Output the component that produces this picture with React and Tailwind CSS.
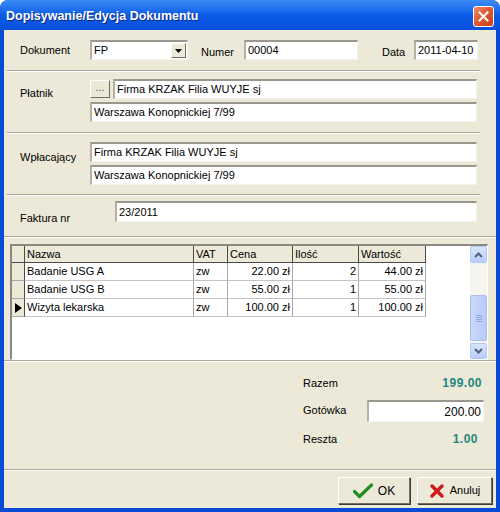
import React from "react";

const sunken =
  "bg-white border-t-2 border-l-2 border-t-[#9a988e] border-l-[#b3b1a6] border-r border-b border-r-[#f4f3ee] border-b-[#f4f3ee]";
const raised =
  "bg-[#ECE9D8] border border-t-white border-l-white border-r-[#716F64] border-b-[#716F64]";

function Field({ className = "", children, right }) {
  return (
    <div
      className={`${sunken} h-[20px] flex items-center px-[2px] text-[11px] text-black leading-none ${
        right ? "justify-end" : ""
      } ${className}`}
    >
      {children}
    </div>
  );
}

function Sep({ className = "" }) {
  return (
    <div className={`h-[2px] border-t border-t-[#ACA899] border-b border-b-white ${className}`} />
  );
}

function CheckIcon() {
  return (
    <svg width="20" height="16" viewBox="0 0 20 16">
      <path
        d="M1.5 8.5 L6.5 13.5 L18.5 2"
        fill="none"
        stroke="#1f8f1f"
        strokeWidth="3.2"
        strokeLinecap="round"
        strokeLinejoin="round"
      />
    </svg>
  );
}

function XIcon() {
  return (
    <svg width="16" height="16" viewBox="0 0 16 16">
      <path
        d="M3 3 L13 13 M13 3 L3 13"
        fill="none"
        stroke="#d01818"
        strokeWidth="3.4"
        strokeLinecap="round"
      />
    </svg>
  );
}

const rows = [
  { name: "Badanie USG A", vat: "zw", cena: "22.00 zł", ilosc: "2", wart: "44.00 zł" },
  { name: "Badanie USG B", vat: "zw", cena: "55.00 zł", ilosc: "1", wart: "55.00 zł" },
  { name: "Wizyta lekarska", vat: "zw", cena: "100.00 zł", ilosc: "1", wart: "100.00 zł", current: true },
];

function Grid() {
  const cell = "h-full flex items-center px-[2px] border-r border-r-[#a8a8a8] border-b border-b-[#c4c4c4]";
  const head = "h-full flex items-center px-[2px] bg-[#ECE9D8] border-r border-r-[#4a4a4a] border-b border-b-[#4a4a4a]";
  return (
    <div className="ml-[6px] mt-[6px] w-[478px] h-[116px] bg-white border-t-2 border-l-2 border-t-[#8b897f] border-l-[#8b897f] border-r border-b border-r-white border-b-white flex">
      <div className="flex-1 flex flex-col text-[11px] leading-none">
        <div className="flex h-[17px]">
          <div className={`${head} w-[13px]`} />
          <div className={`${head} w-[169px]`}>Nazwa</div>
          <div className={`${head} w-[34px]`}>VAT</div>
          <div className={`${head} w-[65px]`}>Cena</div>
          <div className={`${head} w-[66px]`}>Ilość</div>
          <div className={`${head} w-[67px]`}>Wartość</div>
        </div>
        {rows.map((r) => (
          <div key={r.name} className="flex h-[18px]">
            <div className="h-full w-[13px] bg-[#ECE9D8] border-r border-r-[#4a4a4a] border-b border-b-[#a8a8a8] flex items-center justify-center">
              {r.current && (
                <svg width="7" height="10" viewBox="0 0 7 10">
                  <path d="M0 0 L7 5 L0 10 Z" fill="#000" />
                </svg>
              )}
            </div>
            <div className={`${cell} w-[169px]`}>{r.name}</div>
            <div className={`${cell} w-[34px]`}>{r.vat}</div>
            <div className={`${cell} w-[65px] justify-end`}>{r.cena}</div>
            <div className={`${cell} w-[66px] justify-end`}>{r.ilosc}</div>
            <div className={`${cell} w-[67px] justify-end`}>{r.wart}</div>
          </div>
        ))}
      </div>
      {/* scrollbar */}
      <div className="w-[17px] bg-[#F5F4F0] flex flex-col">
        <div className="h-[17px] rounded-[2px] bg-gradient-to-b from-[#dbe6fd] to-[#b9cdf8] border border-[#b4c8f5] flex items-center justify-center">
          <svg width="9" height="6" viewBox="0 0 9 6">
            <path d="M1 5 L4.5 1.5 L8 5" fill="none" stroke="#4d6185" strokeWidth="2" />
          </svg>
        </div>
        <div className="h-[32px]" />
        <div className="h-[46px] rounded-[2px] bg-gradient-to-r from-[#cad9fb] to-[#b7cbf7] border border-[#a9bff0] flex flex-col items-center justify-center gap-[1px]">
          <div className="w-[6px] h-[1px] bg-[#8fa8e0]" />
          <div className="w-[6px] h-[1px] bg-[#8fa8e0]" />
          <div className="w-[6px] h-[1px] bg-[#8fa8e0]" />
          <div className="w-[6px] h-[1px] bg-[#8fa8e0]" />
        </div>
        <div className="flex-1" />
        <div className="h-[16px] rounded-[2px] bg-gradient-to-b from-[#dbe6fd] to-[#b9cdf8] border border-[#b4c8f5] flex items-center justify-center">
          <svg width="9" height="6" viewBox="0 0 9 6">
            <path d="M1 1 L4.5 4.5 L8 1" fill="none" stroke="#4d6185" strokeWidth="2" />
          </svg>
        </div>
      </div>
    </div>
  );
}

export default function App() {
  return (
    <div className="w-[500px] h-[512px] bg-[#0A4BD6] rounded-t-[8px] flex flex-col font-['Liberation_Sans',Arial,sans-serif] text-[11px] text-black overflow-hidden">
      {/* Title bar */}
      <div className="h-[30px] rounded-t-[8px] bg-gradient-to-b from-[#3d8bf6] via-[#0a5ce8] to-[#0a4fdb] flex items-center justify-between pl-[6px] pr-[6px]">
        <span className="text-white font-bold text-[12.5px] pt-[3px] [text-shadow:1px_1px_0_#0a2a80]">
          Dopisywanie/Edycja Dokumentu
        </span>
        <div className="w-[21px] h-[21px] rounded-[3px] border border-white bg-gradient-to-br from-[#eb8a6c] via-[#e0552f] to-[#c8401c] flex items-center justify-center mt-[2px]">
          <svg width="11" height="11" viewBox="0 0 11 11">
            <path d="M1.5 1.5 L9.5 9.5 M9.5 1.5 L1.5 9.5" stroke="#fff" strokeWidth="2" strokeLinecap="square" />
          </svg>
        </div>
      </div>

      {/* Body */}
      <div className="flex-1 mx-[4px] mb-[4px] bg-[#ECE9D8] flex flex-col">
        {/* Top panel */}
        <div className="h-[207px] border-b border-b-[#ACA899] flex flex-col">
          <div className="mt-[10px] flex items-center h-[20px] pl-[16px]">
            <span className="w-[70px]">Dokument</span>
            <div className={`${sunken} w-[98px] h-[20px] flex items-center justify-between pl-[2px] pr-[1px]`}>
              <span>FP</span>
              <div className={`${raised} w-[15px] h-[15px] flex items-center justify-center`}>
                <svg width="7" height="4" viewBox="0 0 7 4">
                  <path d="M0 0 H7 L3.5 4 Z" fill="#000" />
                </svg>
              </div>
            </div>
            <span className="ml-[13px] w-[43px] pt-[4px]">Numer</span>
            <Field className="w-[114px]">00004</Field>
            <span className="ml-[24px] w-[32px] pt-[5px]">Data</span>
            <Field className="w-[64px]">2011-04-10</Field>
          </div>

          <Sep className="mt-[10px] ml-[3px] w-[473px]" />

          <div className="mt-[7px] flex pl-[16px]">
            <span className="w-[70px] pt-[6px]">Płatnik</span>
            <div className="flex flex-col gap-[3px]">
              <div className="flex items-center gap-[3px]">
                <div className={`${raised} w-[20px] h-[18px] flex items-center justify-center text-[#555] leading-none pb-[3px]`}>
                  ...
                </div>
                <Field className="w-[364px]">Firma KRZAK Filia WUYJE sj</Field>
              </div>
              <Field className="w-[387px]">Warszawa Konopnickiej 7/99</Field>
            </div>
          </div>

          <Sep className="mt-[10px] ml-[3px] w-[473px]" />

          <div className="mt-[8px] flex pl-[16px]">
            <span className="w-[70px] pt-[7px]">Wpłacający</span>
            <div className="flex flex-col gap-[3px]">
              <Field className="w-[387px]">Firma KRZAK Filia WUYJE sj</Field>
              <Field className="w-[387px]">Warszawa Konopnickiej 7/99</Field>
            </div>
          </div>

          <Sep className="mt-[9px] ml-[3px] w-[473px]" />

          <div className="mt-[5px] flex pl-[16px]">
            <span className="w-[95px] pt-[9px]">Faktura nr</span>
            <Field className="w-[362px] h-[21px]">23/2011</Field>
          </div>
        </div>

        {/* Grid panel */}
        <div className="h-[124px] border-t border-t-white border-b border-b-[#ACA899]">
          <Grid />
        </div>

        {/* Summary */}
        <div className="h-[109px] border-t border-t-white border-b border-b-[#ACA899] flex flex-col pl-[299px]">
          <div className="flex items-center justify-between h-[20px] mt-[11px] pr-[14px]">
            <span>Razem</span>
            <span className="text-[12px] font-bold text-[#23877f] tracking-[0.5px]">199.00</span>
          </div>
          <div className="flex items-start h-[22px] mt-[7px]">
            <span className="w-[64px] pt-[2px]">Gotówka</span>
            <Field className="w-[117px] h-[22px] text-[12px]" right>
              200.00
            </Field>
          </div>
          <div className="flex items-center justify-between h-[20px] mt-[7px] pr-[18px]">
            <span>Reszta</span>
            <span className="text-[12px] font-bold text-[#23877f] tracking-[0.5px]">1.00</span>
          </div>
        </div>

        {/* Buttons */}
        <div className="flex-1 border-t border-t-white flex justify-end items-start pt-[6px] pr-[4px] gap-[7px]">
          <div className={`${raised} w-[72px] h-[27px] flex items-center justify-center gap-[5px] shadow-[1px_1px_0_#3c3b36]`}>
            <CheckIcon />
            <span className="text-[12px]">OK</span>
          </div>
          <div className={`${raised} w-[75px] h-[27px] flex items-center justify-center gap-[5px] shadow-[1px_1px_0_#3c3b36]`}>
            <XIcon />
            <span>Anuluj</span>
          </div>
        </div>
      </div>
    </div>
  );
}
